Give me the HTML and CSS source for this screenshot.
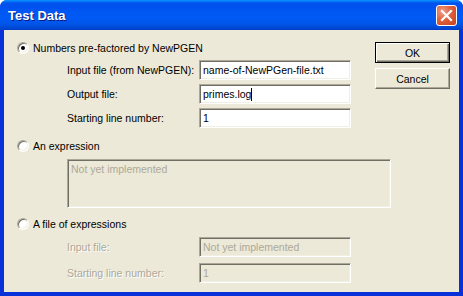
FILE: index.html
```html
<!DOCTYPE html>
<html>
<head>
<meta charset="utf-8">
<link rel="stylesheet" href="styles.css">
</head>
<body>
<div class="window">
  <div class="titlebar">
    <span class="title">Test Data</span>
    <div class="close">
      <svg width="13" height="13" viewBox="0 0 13 13"><path d="M2 2 L11 11 M11 2 L2 11" stroke="#fff" stroke-width="2.2" stroke-linecap="square"/></svg>
    </div>
  </div>
  <div class="client">
    <div class="main">
      <div class="option">
        <span class="radio checked"></span>
        <span class="label">Numbers pre-factored by NewPGEN</span>
      </div>
      <div class="fields first">
        <div class="row"><span class="flabel">Input file (from NewPGEN):</span><div class="edit">name-of-NewPGen-file.txt</div></div>
        <div class="row"><span class="flabel">Output file:</span><div class="edit">primes.log<span class="caret"></span></div></div>
        <div class="row"><span class="flabel">Starting line number:</span><div class="edit">1</div></div>
      </div>
      <div class="option opt2">
        <span class="radio"></span>
        <span class="label">An expression</span>
      </div>
      <div class="memo disabled">Not yet implemented</div>
      <div class="option opt3">
        <span class="radio"></span>
        <span class="label">A file of expressions</span>
      </div>
      <div class="fields third">
        <div class="row"><span class="flabel dis">Input file:</span><div class="edit disabled">Not yet implemented</div></div>
        <div class="row"><span class="flabel dis">Starting line number:</span><div class="edit disabled">1</div></div>
      </div>
    </div>
    <div class="buttons">
      <div class="btn default"><span>OK</span></div>
      <div class="btn"><span>Cancel</span></div>
    </div>
  </div>
</div>
</body>
</html>
```
FILE: styles.css
```css
html, body {
  margin: 0;
  padding: 0;
  background: #ffffff;
}
body {
  font-family: "Liberation Sans", Arial, sans-serif;
  font-size: 10.5px;
  color: #000;
}
.window {
  width: 463px;
  height: 296px;
  display: flex;
  flex-direction: column;
  background: #0831d9;
  border-radius: 7px 7px 0 0;
  overflow: hidden;
}
.titlebar {
  height: 30px;
  flex: none;
  display: flex;
  align-items: center;
  justify-content: space-between;
  padding: 0 6px 0 8px;
  background: linear-gradient(to bottom, #0997ff 0px, #0053ee 3px, #0050ee 6px, #0058f3 12px, #005af5 18px, #0055e7 24px, #0047d4 28px, #003dc4 30px);
}
.title {
  color: #fff;
  font-weight: bold;
  font-size: 13px;
  font-family: "Liberation Sans", Arial, sans-serif;
  text-shadow: 1px 1px 0 #0a1883;
  padding-top: 1px;
}
.close {
  width: 19px;
  height: 19px;
  border: 1px solid #fff;
  border-radius: 3px;
  background: radial-gradient(circle at 30% 30%, #f0a08a 0%, #e0603c 45%, #c8401c 100%);
  display: flex;
  align-items: center;
  justify-content: center;
  margin-top: 1px;
}
.close svg { display: block; }
.client {
  flex: 1;
  margin: 0 4px 4px 4px;
  background: #ece9d8;
  display: flex;
  align-items: flex-start;
}
.main {
  flex: 1;
  min-width: 0;
  padding: 11px 0 0 13px;
  display: flex;
  flex-direction: column;
  white-space: nowrap;
}
.option {
  display: flex;
  align-items: center;
  height: 13px;
}
.radio {
  width: 12px;
  height: 12px;
  flex: none;
  box-sizing: border-box;
  border-radius: 50%;
  background: #fff;
  border: 1px solid;
  border-color: #aca899 #fff #fff #aca899;
  box-shadow: inset 1px 1px 0 #716f64, inset -1px -1px 0 #f1efe2;
  position: relative;
}
.radio.checked::after {
  content: "";
  position: absolute;
  left: 3px;
  top: 3px;
  width: 4px;
  height: 4px;
  border-radius: 50%;
  background: #000;
}
.label {
  margin-left: 4px;
}
.fields {
  display: flex;
  flex-direction: column;
  padding-left: 50px;
}
.fields.first { margin-top: 6px; gap: 4px; }
.fields.third { margin-top: 7px; gap: 6px; }
.row {
  display: flex;
  align-items: center;
}
.flabel {
  width: 132px;
  flex: none;
}
.flabel.dis {
  color: #aca899;
  text-shadow: 1px 1px 0 #fff;
}
.edit {
  width: 152px;
  height: 20px;
  flex: none;
  box-sizing: border-box;
  background: #fff;
  border: 1px solid;
  border-color: #aca899 #fff #fff #aca899;
  box-shadow: inset 1px 1px 0 #716f64, inset -1px -1px 0 #f1efe2;
  padding: 3px 0 0 3px;
  line-height: 13px;
  display: flex;
  align-items: flex-start;
}
.edit.disabled, .memo.disabled {
  background: #ece9d8;
  color: #aca899;
}
.caret {
  display: inline-block;
  width: 1px;
  height: 13px;
  background: #000;
}
.opt2 { margin-top: 11px; }
.memo {
  flex: none;
  margin: 7px 0 0 50px;
  width: 324px;
  height: 49px;
  box-sizing: border-box;
  border: 1px solid;
  border-color: #aca899 #fff #fff #aca899;
  box-shadow: inset 1px 1px 0 #716f64, inset -1px -1px 0 #f1efe2;
  padding: 3px 0 0 3px;
  line-height: 13px;
}
.opt3 { margin-top: 9px; }
.buttons {
  flex: none;
  width: 75px;
  display: flex;
  flex-direction: column;
  gap: 5px;
  margin: 12px 9px 0 0;
}
.btn {
  width: 75px;
  height: 21px;
  box-sizing: border-box;
  background: #ece9d8;
  border: 1px solid;
  border-color: #fff #716f64 #716f64 #fff;
  box-shadow: inset -1px -1px 0 #aca899;
  display: flex;
  align-items: center;
  justify-content: center;
}
.btn.default {
  border: 1px solid #000;
  box-shadow: inset 1px 1px 0 #fff, inset -1px -1px 0 #716f64, inset -2px -2px 0 #aca899;
}
```
